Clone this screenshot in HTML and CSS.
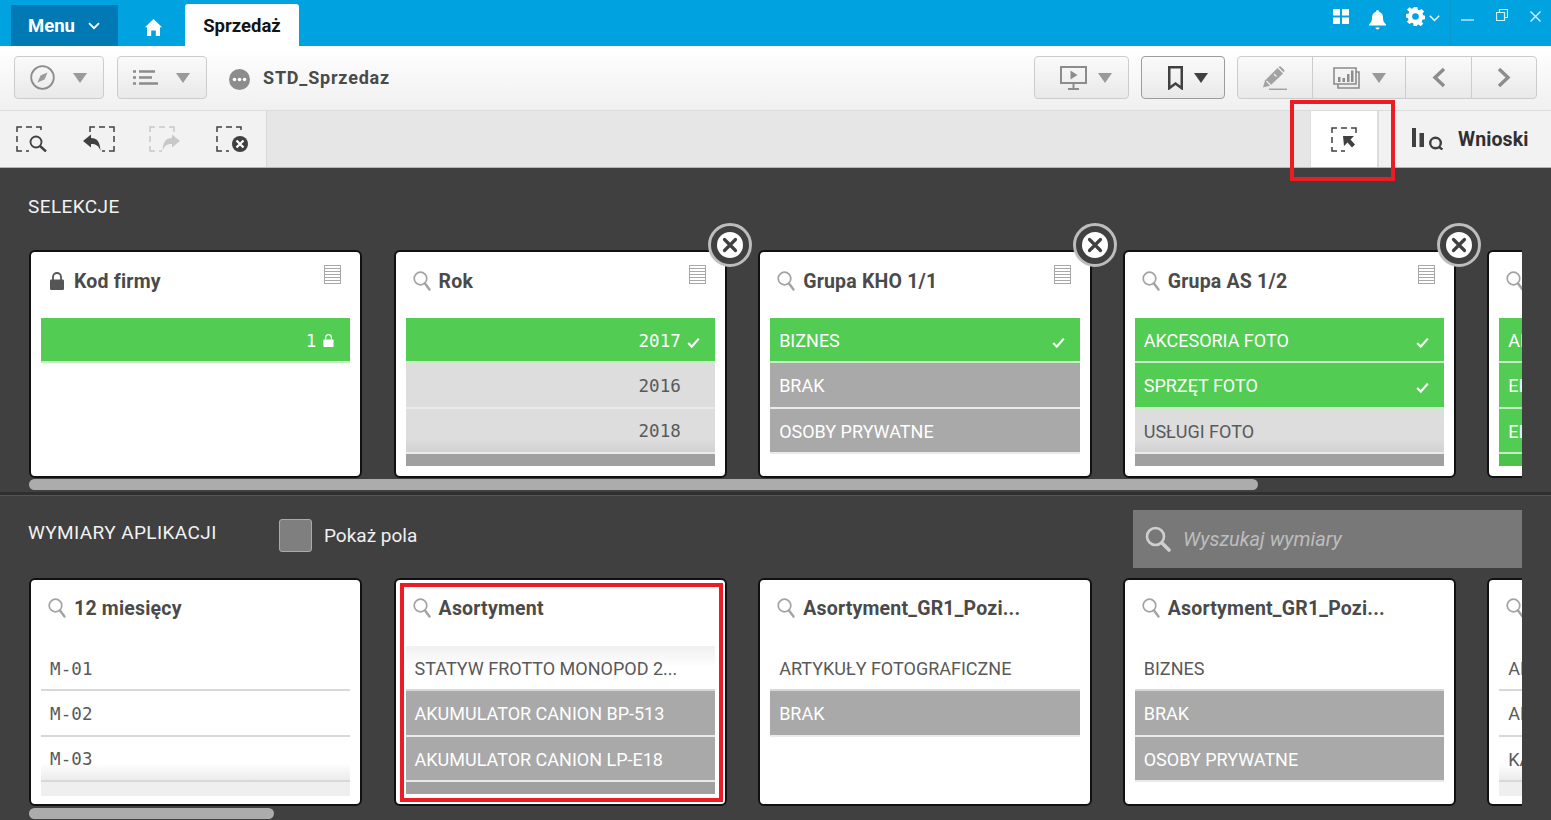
FILE: index.html
```html
<!DOCTYPE html>
<html lang="pl">
<head>
<meta charset="utf-8">
<title>Sprzedaż</title>
<link rel="stylesheet" href="styles.css">
</head>
<body>
<svg class="defs" xmlns="http://www.w3.org/2000/svg">
  <symbol id="i-search" viewBox="0 0 18 20"><circle cx="7.5" cy="7.5" r="6.3" fill="none" stroke="#a3a3a3" stroke-width="1.7"/><path d="M12 12.5l4.5 6" stroke="#a3a3a3" stroke-width="2.4" stroke-linecap="round"/></symbol>
  <symbol id="i-hist" viewBox="0 0 17 19"><rect x="0.5" y="0.5" width="16" height="18" fill="#fff" stroke="#a8a8a8"/><path d="M1 3.5h15M1 6.5h15M1 9.5h15M1 12.5h15M1 15.5h15" stroke="#a8a8a8" stroke-width="1.2"/></symbol>
  <symbol id="i-lock" viewBox="0 0 14 18"><path d="M3 8V5a4 4 0 0 1 8 0v3" fill="none" stroke="currentColor" stroke-width="1.8"/><rect x="0" y="7.5" width="14" height="10.5" rx="1.2" fill="currentColor"/></symbol>
  <symbol id="i-check" viewBox="0 0 13 11"><path d="M1.2 6l3.6 3.6L11.8 1.6" fill="none" stroke="#fff" stroke-width="2.2"/></symbol>
  <symbol id="i-close" viewBox="0 0 44 44"><circle cx="22" cy="22" r="20.5" fill="#404040" stroke="#bdbdbd" stroke-width="3"/><circle cx="22" cy="22" r="13" fill="#fff"/><path d="M16.5 16.5l11 11M27.5 16.5l-11 11" stroke="#404040" stroke-width="3.2" stroke-linecap="round"/></symbol>
  <symbol id="i-caret" viewBox="0 0 14 10"><path d="M0 0h14L7 10z" fill="currentColor"/></symbol>
</svg>

<header class="topbar">
  <button class="menu-btn">Menu
    <svg class="menu-chev" viewBox="0 0 12 8"><path d="M1 1.2l5 5 5-5" fill="none" stroke="#fff" stroke-width="1.8"/></svg>
  </button>
  <div class="home">
    <svg class="home-ic" viewBox="0 0 17 17"><path d="M8.5 0L17 8.2h-2V17h-4.2v-5.5H6.2V17H2V8.2H0z" fill="#fff"/></svg>
  </div>
  <div class="tab">Sprzedaż</div>
  <div class="spacer"></div>
  <div class="win-icons">
    <svg class="w-grid" viewBox="0 0 16 15"><path d="M0 0h7v6.5H0zM9 0h7v6.5H9zM0 8.5h7V15H0zM9 8.5h7V15H9z" fill="#fff"/></svg>
    <svg class="w-bell" viewBox="0 0 17 21"><path d="M8.5 1a1.5 1.5 0 0 1 1.5 1.7c3 .8 4 3.300 4 6.300 0 3 1 4.500 3 6.500v1H0v-1c2-2 3-3.500 3-6.500 0-3 1-5.500 4-6.300A1.500 1.500 0 0 1 8.500 1zM6.500 18.500h4a2 2 0 0 1-4 0z" fill="#fff"/></svg>
    <svg class="w-gear" viewBox="0 0 20 20"><path d="M8 0h4l.5 2.800 1.700.7L16.500 2 19 4.800l-1.700 2.300.7 1.700 2 .4v3.800l-2.800.5-.7 1.700 1.700 2.300-2.700 2.700-2.300-1.700-1.700.7L12 20H8l-.5-2.800-1.700-.7L3.500 18 1 15.500l1.700-2.300-.7-1.700-2-.4V7.300l2.800-.5.700-1.700L1 2.800 3.700.2 6 1.800l1.700-.7zM10 6.500a3.500 3.500 0 1 0 0 7 3.500 3.500 0 0 0 0-7z" fill="#fff" fill-rule="evenodd"/></svg>
    <svg class="w-chev" viewBox="0 0 11 7"><path d="M.8.8l4.700 4.700L10.200.8" fill="none" stroke="#fff" stroke-width="1.400"/></svg>
    <span class="w-sep"></span>
    <svg class="w-min" viewBox="0 0 13 2"><path d="M0 1h13" stroke="#d5effa" stroke-width="1.300"/></svg>
    <svg class="w-res" viewBox="0 0 12 12"><path d="M.5 3.500h8v8h-8zM3.500 3.500V.5h8v8H8.500" fill="none" stroke="#d5effa" stroke-width="1.200"/></svg>
    <svg class="w-x" viewBox="0 0 11 11"><path d="M.5.5l10 10M10.500.5l-10 10" stroke="#e8f6fc" stroke-width="1.300"/></svg>
  </div>
</header>

<div class="toolbar">
  <button class="tbtn tbtn-a">
    <svg class="ic-compass" viewBox="0 0 25 25"><circle cx="12.500" cy="12.500" r="11.300" fill="none" stroke="#8c8c8c" stroke-width="1.800"/><path d="M17.500 7.500l-3 7-7 3 3-7z" fill="#9a9a9a"/></svg>
    <svg class="caret" viewBox="0 0 14 10"><use href="#i-caret"/></svg>
  </button>
  <button class="tbtn tbtn-a">
    <svg class="ic-list" viewBox="0 0 25 15"><path d="M0 1.500h3M6 1.500h16M0 7.500h3M6 7.500h13M0 13.500h3M6 13.500h19" stroke="#8c8c8c" stroke-width="2.600"/></svg>
    <svg class="caret" viewBox="0 0 14 10"><use href="#i-caret"/></svg>
  </button>
  <svg class="ic-more" viewBox="0 0 21 21"><circle cx="10.500" cy="10.500" r="10.500" fill="#8c8c8c"/><circle cx="5.500" cy="10.500" r="1.800" fill="#fff"/><circle cx="10.500" cy="10.500" r="1.800" fill="#fff"/><circle cx="15.500" cy="10.500" r="1.800" fill="#fff"/></svg>
  <div class="app-title">STD_Sprzedaz</div>
  <div class="spacer"></div>
  <button class="tbtn tbtn-b">
    <svg class="ic-present" viewBox="0 0 27 24"><path d="M1 1h25v16H1z" fill="none" stroke="#8c8c8c" stroke-width="2"/><path d="M10.500 4.500l7 4.500-7 4.500z" fill="#8c8c8c"/><path d="M13.500 17v5M8 23h11" stroke="#8c8c8c" stroke-width="2"/></svg>
    <svg class="caret" viewBox="0 0 14 10"><use href="#i-caret"/></svg>
  </button>
  <button class="tbtn tbtn-c">
    <svg class="ic-book" viewBox="0 0 15 24"><path d="M1.200 1.200h12.600v21L7.500 17.500 1.200 22.200z" fill="none" stroke="#404040" stroke-width="2.600"/></svg>
    <svg class="caret caret-dark" viewBox="0 0 14 10"><use href="#i-caret"/></svg>
  </button>
  <div class="tgroup">
    <button class="seg seg-edit">
      <svg class="ic-pen" viewBox="0 0 24 24"><path d="M0 21.500l2-7L14.500 2l5.500 5.500L7.500 19.500z" fill="#a2a2a2"/><path d="M16 .8a1.500 1.500 0 0 1 2 0l3 3a1.500 1.500 0 0 1 0 2l-.4.4-5.300-5.300z" fill="#a2a2a2"/><path d="M6 23.300h18" stroke="#a2a2a2" stroke-width="1.500"/><path d="M3.500 15l5 5M11 8l2.500 2.500" stroke="#f4f4f4" stroke-width="1.100"/></svg>
    </button>
    <button class="seg seg-story">
      <svg class="ic-story" viewBox="0 0 27 22"><path d="M1 1h22v16H1z" fill="none" stroke="#8c8c8c" stroke-width="1.600"/><path d="M23 5h3v16H5v-4" fill="none" stroke="#8c8c8c" stroke-width="1.600"/><path d="M5 10h2.500v5H5zM9.500 11h2.500v4H9.500zM14 7h2.500v8H14zM18 3.500h2.500V15H18z" fill="#8c8c8c"/></svg>
      <svg class="caret" viewBox="0 0 14 10"><use href="#i-caret"/></svg>
    </button>
    <button class="seg seg-nav">
      <svg class="ic-nav" viewBox="0 0 14 21"><path d="M12 2L3 10.500l9 8.500" fill="none" stroke="#8c8c8c" stroke-width="3.400"/></svg>
    </button>
    <button class="seg seg-nav seg-last">
      <svg class="ic-nav" viewBox="0 0 14 21"><path d="M2 2l9 8.500L2 19" fill="none" stroke="#8c8c8c" stroke-width="3.400"/></svg>
    </button>
  </div>
</div>

<div class="selbar">
  <div class="sel-tools">
    <button class="stool">
      <svg class="ic-sel" viewBox="0 0 32 26"><path d="M1 6V1h5M10 1h6M20 1h5v3M1 10v6M1 20v5h5M10 25h3" fill="none" stroke="#404040" stroke-width="1.500"/><circle cx="20" cy="16" r="5.500" fill="none" stroke="#404040" stroke-width="1.800"/><path d="M24 20l6 5.500" stroke="#404040" stroke-width="2.400"/></svg>
    </button>
    <button class="stool">
      <svg class="ic-sel" viewBox="0 0 32 26"><path d="M7 6V1h5M16 1h6M26 1h5v5M31 10v6M31 20v5h-5M22 25h-3" fill="none" stroke="#404040" stroke-width="1.500"/><path d="M0 15l8-6.500V12c6 0 9 3.500 9.500 13-2-5.500-4.500-7-9.500-7v3.500z" fill="#404040"/></svg>
    </button>
    <button class="stool stool-off">
      <svg class="ic-sel" viewBox="0 0 32 26"><path d="M1 6V1h5M10 1h6M20 1h5v5M1 10v6M1 20v5h5M10 25h3" fill="none" stroke="#c8c8c8" stroke-width="1.500"/><path d="M31 15l-8-6.500V12c-6 0-9 3.500-9.500 13 2-5.500 4.500-7 9.500-7v3.500z" fill="#c8c8c8"/></svg>
    </button>
    <button class="stool">
      <svg class="ic-sel" viewBox="0 0 32 26"><path d="M1 6V1h5M10 1h6M20 1h5v3M1 10v6M1 20v5h5M10 25h3" fill="none" stroke="#404040" stroke-width="1.500"/><circle cx="24" cy="18" r="8" fill="#404040"/><path d="M20.500 14.500l7 7M27.500 14.500l-7 7" stroke="#fff" stroke-width="2.200"/></svg>
    </button>
  </div>
  <div class="spacer"></div>
  <div class="sel-active">
    <svg class="ic-sel-a" viewBox="0 0 26 25"><path d="M1 6V1h5M10 1h6M20 1h5v5M1 10v6M1 20v4h5M10 24h4" fill="none" stroke="#404040" stroke-width="1.500"/><path d="M12 9h11l-3.500 3.500 4.500 5-3 3-4.500-5L13 19z" fill="#404040"/></svg>
  </div>
  <div class="insights">
    <svg class="ic-ins" viewBox="0 0 31 22"><path d="M0 0h4v19H0zM7.500 5H12v14H7.500z" fill="#404040"/><circle cx="23.500" cy="15" r="5.300" fill="none" stroke="#404040" stroke-width="2.400"/><path d="M27 19l3.500 2.500" stroke="#404040" stroke-width="2.400"/></svg>
    <span class="ins-text">Wnioski</span>
  </div>
</div>

<main class="stage">
  <section class="sec sec-top">
    <h2 class="sec-title">SELEKCJE</h2>
    <div class="cards">
      <article class="card">
        <div class="card-head">
          <svg class="head-lock"><use href="#i-lock"/></svg>
          <span class="card-title">Kod firmy</span>
          <svg class="head-hist"><use href="#i-hist"/></svg>
        </div>
        <ul class="rows">
          <li class="row green"><span class="num">1</span><svg class="slot lock-w"><use href="#i-lock"/></svg></li>
        </ul>
      </article>

      <article class="card">
        <div class="card-head">
          <svg class="head-search"><use href="#i-search"/></svg>
          <span class="card-title">Rok</span>
          <svg class="head-hist"><use href="#i-hist"/></svg>
        </div>
        <ul class="rows">
          <li class="row green"><span class="num">2017</span><svg class="slot"><use href="#i-check"/></svg></li>
          <li class="row alt"><span class="num">2016</span><span class="slot"></span></li>
          <li class="row alt fade-alt"><span class="num">2018</span><span class="slot"></span></li>
          <li class="row stub stub-ex"></li>
        </ul>
        <svg class="close"><use href="#i-close"/></svg>
      </article>

      <article class="card">
        <div class="card-head">
          <svg class="head-search"><use href="#i-search"/></svg>
          <span class="card-title">Grupa KHO 1/1</span>
          <svg class="head-hist"><use href="#i-hist"/></svg>
        </div>
        <ul class="rows">
          <li class="row green left"><span>BIZNES</span><svg class="slot"><use href="#i-check"/></svg></li>
          <li class="row ex left"><span>BRAK</span></li>
          <li class="row ex left"><span>OSOBY PRYWATNE</span></li>
        </ul>
        <svg class="close"><use href="#i-close"/></svg>
      </article>

      <article class="card">
        <div class="card-head">
          <svg class="head-search"><use href="#i-search"/></svg>
          <span class="card-title">Grupa AS 1/2</span>
          <svg class="head-hist"><use href="#i-hist"/></svg>
        </div>
        <ul class="rows">
          <li class="row green left"><span>AKCESORIA FOTO</span><svg class="slot"><use href="#i-check"/></svg></li>
          <li class="row green left"><span>SPRZĘT FOTO</span><svg class="slot"><use href="#i-check"/></svg></li>
          <li class="row alt fade-alt left"><span>USŁUGI FOTO</span></li>
          <li class="row stub stub-ex"></li>
        </ul>
        <svg class="close"><use href="#i-close"/></svg>
      </article>

      <article class="card">
        <div class="card-head">
          <svg class="head-search"><use href="#i-search"/></svg>
          <span class="card-title">Grupa AS 2/2</span>
        </div>
        <ul class="rows">
          <li class="row green left"><span>AKCESORIA</span></li>
          <li class="row green left"><span>ELEKTRONIKA</span></li>
          <li class="row green left"><span>ELEMENTY</span></li>
          <li class="row stub stub-green"></li>
        </ul>
      </article>
    </div>
    <div class="scroll scroll-top"></div>
  </section>

  <section class="sec sec-bottom">
    <div class="dim-head">
      <h2 class="sec-title dim-title">WYMIARY APLIKACJI</h2>
      <span class="checkbox"></span>
      <span class="check-label">Pokaż pola</span>
      <div class="spacer"></div>
      <div class="search">
        <svg class="search-ic" viewBox="0 0 26 26"><circle cx="10.500" cy="10.500" r="8.500" fill="none" stroke="#cfcfcf" stroke-width="2.600"/><path d="M17 17l7 7" stroke="#cfcfcf" stroke-width="3.600" stroke-linecap="round"/></svg>
        <span class="search-text">Wyszukaj wymiary</span>
      </div>
    </div>
    <div class="cards cards-dim">
      <article class="card">
        <div class="card-head">
          <svg class="head-search"><use href="#i-search"/></svg>
          <span class="card-title">12 miesięcy</span>
        </div>
        <ul class="rows">
          <li class="row plain left"><span class="num">M-01</span></li>
          <li class="row plain left"><span class="num">M-02</span></li>
          <li class="row plain fade-plain left"><span class="num">M-03</span></li>
          <li class="row stub stub-plain"></li>
        </ul>
      </article>

      <article class="card">
        <div class="card-head">
          <svg class="head-search"><use href="#i-search"/></svg>
          <span class="card-title">Asortyment</span>
        </div>
        <ul class="rows">
          <li class="row plain fade-top left"><span>STATYW FROTTO MONOPOD 2...</span></li>
          <li class="row ex left"><span>AKUMULATOR CANION BP-513</span></li>
          <li class="row ex left"><span>AKUMULATOR CANION LP-E18</span></li>
          <li class="row stub stub-ex"></li>
        </ul>
        <div class="mark mark-card"></div>
      </article>

      <article class="card">
        <div class="card-head">
          <svg class="head-search"><use href="#i-search"/></svg>
          <span class="card-title">Asortyment_GR1_Pozi...</span>
        </div>
        <ul class="rows">
          <li class="row plain left"><span>ARTYKUŁY FOTOGRAFICZNE</span></li>
          <li class="row ex left"><span>BRAK</span></li>
        </ul>
      </article>

      <article class="card">
        <div class="card-head">
          <svg class="head-search"><use href="#i-search"/></svg>
          <span class="card-title">Asortyment_GR1_Pozi...</span>
        </div>
        <ul class="rows">
          <li class="row plain left"><span>BIZNES</span></li>
          <li class="row ex left"><span>BRAK</span></li>
          <li class="row ex left"><span>OSOBY PRYWATNE</span></li>
        </ul>
      </article>

      <article class="card">
        <div class="card-head">
          <svg class="head-search"><use href="#i-search"/></svg>
          <span class="card-title">Asortyment</span>
        </div>
        <ul class="rows">
          <li class="row plain left"><span>AKCESORIA</span></li>
          <li class="row plain left"><span>AKUMULATORY</span></li>
          <li class="row plain fade-plain left"><span>KARTY</span></li>
          <li class="row stub stub-plain"></li>
        </ul>
      </article>
    </div>
    <div class="scroll scroll-bottom"></div>
  </section>
</main>

<div class="mark mark-tool"></div>
</body>
</html>
```

FILE: styles.css
```css
* { box-sizing: border-box; }
html, body { margin: 0; padding: 0; }
body {
  position: relative;
  width: 1551px;
  height: 820px;
  overflow: hidden;
  background: #404040;
  font-family: Roboto, "Noto Sans", "Liberation Sans", sans-serif;
  color: #404040;
}
button { font: inherit; color: inherit; border: 0; background: none; padding: 0; margin: 0; }
ul { list-style: none; margin: 0; padding: 0; }
h2 { margin: 0; font-weight: 400; }
svg { display: block; flex: none; }
.defs { display: none; }
.spacer { flex: 1; }

/* top bar */
.topbar {
  height: 46px;
  background: #00a3e0;
  display: flex;
  align-items: flex-end;
  padding-left: 11px;
}
.menu-btn {
  width: 107px;
  height: 41px;
  background: #0079b5;
  color: #fff;
  font-size: 18.5px;
  font-weight: 700;
  display: flex;
  align-items: center;
  padding-left: 17px;
}
.menu-chev { width: 12px; height: 8px; margin-left: 13px; }
.home { width: 67px; height: 41px; display: flex; align-items: center; padding-left: 27px; }
.home-ic { width: 17px; height: 17px; margin-top: 3px; }
.tab {
  width: 114px;
  height: 42px;
  padding-top: 1px;
  background: #fff;
  color: #141414;
  border-radius: 3px 3px 0 0;
  font-size: 18.5px;
  font-weight: 700;
  display: flex;
  align-items: center;
  justify-content: center;
}
.win-icons { position: relative; height: 46px; display: flex; align-items: flex-start; padding-right: 10px; }
.w-grid { width: 16px; height: 15px; margin-top: 9px; }
.w-bell { width: 17px; height: 21px; margin: 9px 0 0 20px; }
.w-gear { width: 19px; height: 19px; margin: 7px 0 0 20px; }
.w-chev { width: 11px; height: 7px; margin: 15px 0 0 4px; }
.w-sep { width: 1px; height: 46px; background: #0d97cc; margin-left: 10px; }
.w-min { width: 13px; height: 2px; margin: 19px 0 0 10px; }
.w-res { width: 12px; height: 12px; margin: 9px 0 0 22px; }
.w-x { width: 11px; height: 11px; margin: 11px 0 0 22px; }

/* toolbar */
.toolbar {
  height: 65px;
  background: linear-gradient(#fff, #f0f0f0);
  border-bottom: 1px solid #dcdcdc;
  display: flex;
  align-items: center;
  padding: 0 14px 1px;
}
.tbtn {
  height: 43px;
  border: 1px solid #ccc;
  border-radius: 4px;
  background: linear-gradient(#fafafa, #e9e9e9);
  display: flex;
  align-items: center;
  color: #9a9a9a;
}
.tbtn-a { width: 90px; margin-right: 13px; padding: 0 16px 0 15px; justify-content: space-between; }
.tbtn-a:nth-child(2) { margin-right: 22px; }
.caret { width: 14px; height: 10px; }
.caret-dark { color: #404040; }
.ic-compass { width: 25px; height: 25px; }
.ic-list { width: 25px; height: 15px; }
.ic-more { width: 21px; height: 21px; margin-top: 3px; }
.app-title { font-size: 18px; font-weight: 700; margin-left: 13px; letter-spacing: .8px; color: #4a4a4a; }
.tbtn-b { width: 95px; padding: 0 16px 0 25px; justify-content: space-between; margin-right: 12px; }
.ic-present { width: 27px; height: 24px; }
.tbtn-c {
  width: 84px;
  padding: 0 16px 0 26px;
  justify-content: space-between;
  margin-right: 12px;
  border-color: #9c9c9c;
  color: #404040;
}
.ic-book { width: 15px; height: 24px; }
.tgroup {
  width: 300px;
  height: 43px;
  border: 1px solid #ccc;
  border-radius: 4px;
  background: linear-gradient(#fafafa, #e9e9e9);
  display: flex;
  color: #9a9a9a;
}
.seg { display: flex; align-items: center; justify-content: center; border-right: 1px solid #ccc; height: 100%; }
.seg-edit { width: 75px; }
.ic-pen { width: 24px; height: 24px; }
.seg-story { width: 93px; gap: 12px; }
.ic-story { width: 27px; height: 22px; }
.seg-nav { width: 66px; }
.seg-last { border-right: 0; flex: 1; }
.ic-nav { width: 14px; height: 21px; }

/* selection bar */
.selbar {
  height: 57px;
  display: flex;
  background: #e6e6e6;
  border-bottom: 1px solid #b5b5b5;
}
.sel-tools {
  width: 267px;
  background: #f2f2f2;
  border-right: 1px solid #d8d8d8;
  display: flex;
}
.stool { width: 66.8px; flex: none; display: flex; align-items: center; justify-content: center; padding-right: 3px; }
.ic-sel { width: 32px; height: 26px; }
.sel-active {
  width: 69px;
  background: #fff;
  border: solid #dcdcdc;
  border-width: 0 2px 0 1px;
  display: flex;
  align-items: center;
  justify-content: center;
}
.ic-sel-a { width: 26px; height: 25px; }
.insights {
  width: 172px;
  background: #f2f2f2;
  display: flex;
  align-items: center;
  padding-left: 33px;
}
.ic-ins { width: 31px; height: 22px; }
.ins-text { font-size: 19.5px; letter-spacing: .1px; font-weight: 700; margin-left: 15px; color: #303030; }

/* stage */
.stage { height: 652px; background: #404040; padding: 0 29px 0 28px; display: flex; flex-direction: column; }
.sec-top { flex: none; height: 328px; position: relative; }
.sec-top::after {
  content: "";
  position: absolute;
  left: -28px;
  right: -29px;
  bottom: 0;
  height: 3px;
  background: #2f2f2f;
  border-bottom: 1px solid #555;
}
.sec-title { font-size: 19px; letter-spacing: .4px; line-height: 24px; color: #f2f2f2; padding-top: 27px; }
.cards {
  display: flex;
  gap: 31.2px;
  padding: 0 0 0 1px;
  overflow: hidden;
}
.sec-top .cards { padding-top: 28px; height: 256px; margin-top: 3px; }
.card {
  flex: 0 0 333.4px;
  position: relative;
  height: 228px;
  background: #fff;
  border: 2px solid #111;
  border-radius: 6px;
  padding: 0 10px;
}
.card-head { height: 66px; display: flex; align-items: center; padding: 0 0 8px 7px; position: relative; }
.cards-dim .card-head { padding-bottom: 10px; }
.card-title { font-size: 19.5px; letter-spacing: .2px; font-weight: 700; color: #4a4a4a; margin-left: 8px; white-space: nowrap; }
.head-search { width: 18px; height: 20px; color: #a3a3a3; }
.head-lock { width: 14px; height: 18px; color: #555; margin: 0 2px; }
.head-hist { position: absolute; right: 9px; top: 13px; width: 17px; height: 19px; }
.close { position: absolute; top: -29px; right: -27px; width: 44px; height: 44px; }
.row {
  height: 45.33px;
  border-bottom: 2px solid #eaeaea;
  display: flex;
  align-items: center;
  padding: 2px 15px 0 9px;
  font-size: 18px;
  white-space: nowrap;
  justify-content: flex-end;
  gap: 6px;
}
.row.left { justify-content: space-between; }
.num { font-family: "DejaVu Sans Mono", monospace; font-size: 17.5px; letter-spacing: .1px; }
.slot { width: 13px; height: 11px; margin-top: 4px; }
.lock-w { height: 13px; color: #fff; margin-top: 0; }
.green { background: #52cc52; color: #fff; border-bottom-color: #c5ecc5; }
.alt { background: #ddd; color: #595959; }
.ex { background: #a9a9a9; color: #fff; }
.plain { background: #fff; color: #595959; border-bottom-color: #d8d8d8; }
.fade-alt { background: linear-gradient(#ddd 70%, #d2d2d2); }
.fade-plain { background: linear-gradient(#fff 60%, #ececec); }
.fade-top { background: linear-gradient(#f0f0f0, #fff 50%); }
.stub { height: 12px; border: 0; }
.stub-ex { background: #a0a0a0; }
.stub-green { background: #4cc24c; }
.stub-plain { height: 14px; background: #efefef; }

/* scrollbars */
.scroll { height: 11px; margin-left: 1px; background: #acacac; border-radius: 6px; }
.scroll-top { width: 1229px; margin-top: 1px; }
.scroll-bottom { width: 245px; }

/* bottom section */
.sec-bottom { flex: 1; }
.dim-head { height: 72px; display: flex; align-items: flex-start; padding-top: 14px; }
.dim-title { padding-top: 11px; width: 251px; }
.checkbox {
  width: 33px;
  height: 33px;
  margin-top: 9px;
  background: #7f7f7f;
  border: 1px solid #aaa;
  border-radius: 3px;
}
.check-label { font-size: 19px; color: #f0f0f0; margin: 14px 0 0 12px; }
.search {
  width: 389px;
  height: 58px;
  background: #787878;
  display: flex;
  align-items: center;
  padding-left: 12px;
}
.search-ic { width: 26px; height: 26px; }
.search-text { font-size: 20px; font-style: italic; color: #bdbdbd; margin-left: 12px; }
.cards-dim { height: 230px; margin-top: 10px; }

/* red annotation frames */
.mark { position: absolute; border: 4px solid #ed1c24; pointer-events: none; }
.mark-card { left: 4px; top: 3px; right: 2px; bottom: 2px; }
.mark-tool { left: 1290px; top: 100px; width: 105px; height: 81px; }
```
